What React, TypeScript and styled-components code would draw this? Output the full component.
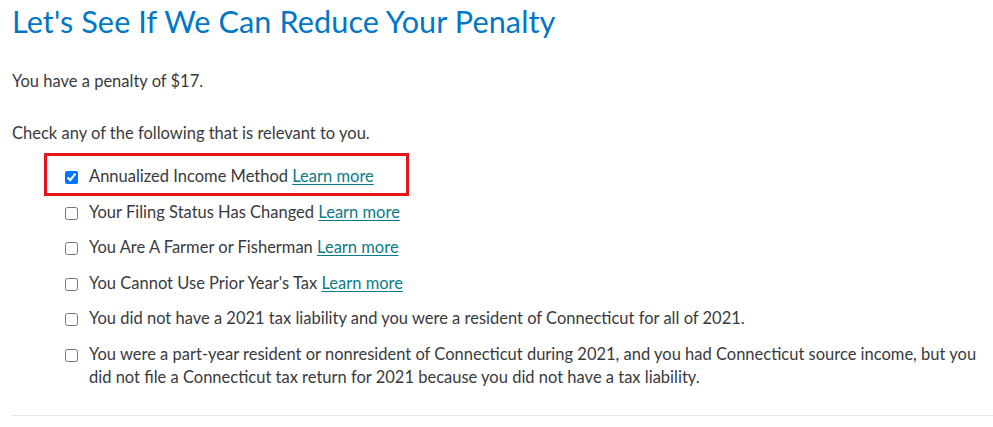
import React from "react";
import styled, { createGlobalStyle } from "styled-components";

const GlobalStyle = createGlobalStyle`
  html, body {
    margin: 0;
    padding: 0;
    background: #ffffff;
  }
  body {
    font-family: Lato, "Noto Sans", "Liberation Sans", sans-serif;
    color: #393a3d;
  }
`;

const Page = styled.main`
  padding: 0 0 0 12px;
  display: flex;
  flex-direction: column;
`;

const Title = styled.h1`
  margin: 4px 0 0 0;
  font-size: 30.6px;
  line-height: 36px;
  font-weight: 400;
  color: #0077c5;
  letter-spacing: 0.1px;
`;

const Paragraph = styled.p<{ $top: number }>`
  margin: ${(p) => p.$top}px 0 0 0;
  font-size: 16.5px;
  line-height: 24px;
`;

const OptionList = styled.div`
  display: flex;
  flex-direction: column;
  gap: 12px;
  margin: 20px 0 0 0;
  padding: 0 10px 0 53px;
`;

const Option = styled.label<{ $highlighted?: boolean }>`
  position: relative;
  display: flex;
  align-items: flex-start;
  gap: 11px;
  font-size: 16.5px;
  line-height: 23.5px;

  ${(p) =>
    p.$highlighted &&
    `
    &::before {
      content: "";
      position: absolute;
      left: -21px;
      top: -12px;
      width: 359px;
      height: 37px;
      border: 3px solid #e8141c;
      pointer-events: none;
    }
  `}
`;

const Box = styled.input`
  flex: 0 0 auto;
  width: 13px;
  height: 13px;
  margin: 6px 0 0 0;
`;

const LearnMore = styled.a`
  color: #0b7a8b;
  text-decoration: underline;
  text-underline-offset: 2px;
`;

const Divider = styled.hr`
  margin: 25px 0 0 -1px;
  border: 0;
  border-top: 1px solid #e6e6e6;
  height: 0;
`;

type Item = { text: string; learn?: boolean; checked?: boolean };

const items: Item[] = [
  { text: "Annualized Income Method", learn: true, checked: true },
  { text: "Your Filing Status Has Changed", learn: true },
  { text: "You Are A Farmer or Fisherman", learn: true },
  { text: "You Cannot Use Prior Year's Tax", learn: true },
  {
    text: "You did not have a 2021 tax liability and you were a resident of Connecticut for all of 2021.",
  },
  {
    text: "You were a part-year resident or nonresident of Connecticut during 2021, and you had Connecticut source income, but you did not file a Connecticut tax return for 2021 because you did not have a tax liability.",
  },
];

export default function App() {
  return (
    <>
      <GlobalStyle />
      <Page>
        <Title>Let's See If We Can Reduce Your Penalty</Title>
        <Paragraph $top={29}>You have a penalty of $17.</Paragraph>
        <Paragraph $top={28}>Check any of the following that is relevant to you.</Paragraph>
        <OptionList>
          {items.map((it, i) => (
            <Option key={i} $highlighted={i === 0}>
              <Box type="checkbox" defaultChecked={it.checked} />
              <span>
                {it.text}
                {it.learn && (
                  <>
                    {" "}
                    <LearnMore href="#" onClick={(e) => e.preventDefault()}>
                      Learn more
                    </LearnMore>
                  </>
                )}
              </span>
            </Option>
          ))}
        </OptionList>
        <Divider />
      </Page>
    </>
  );
}
